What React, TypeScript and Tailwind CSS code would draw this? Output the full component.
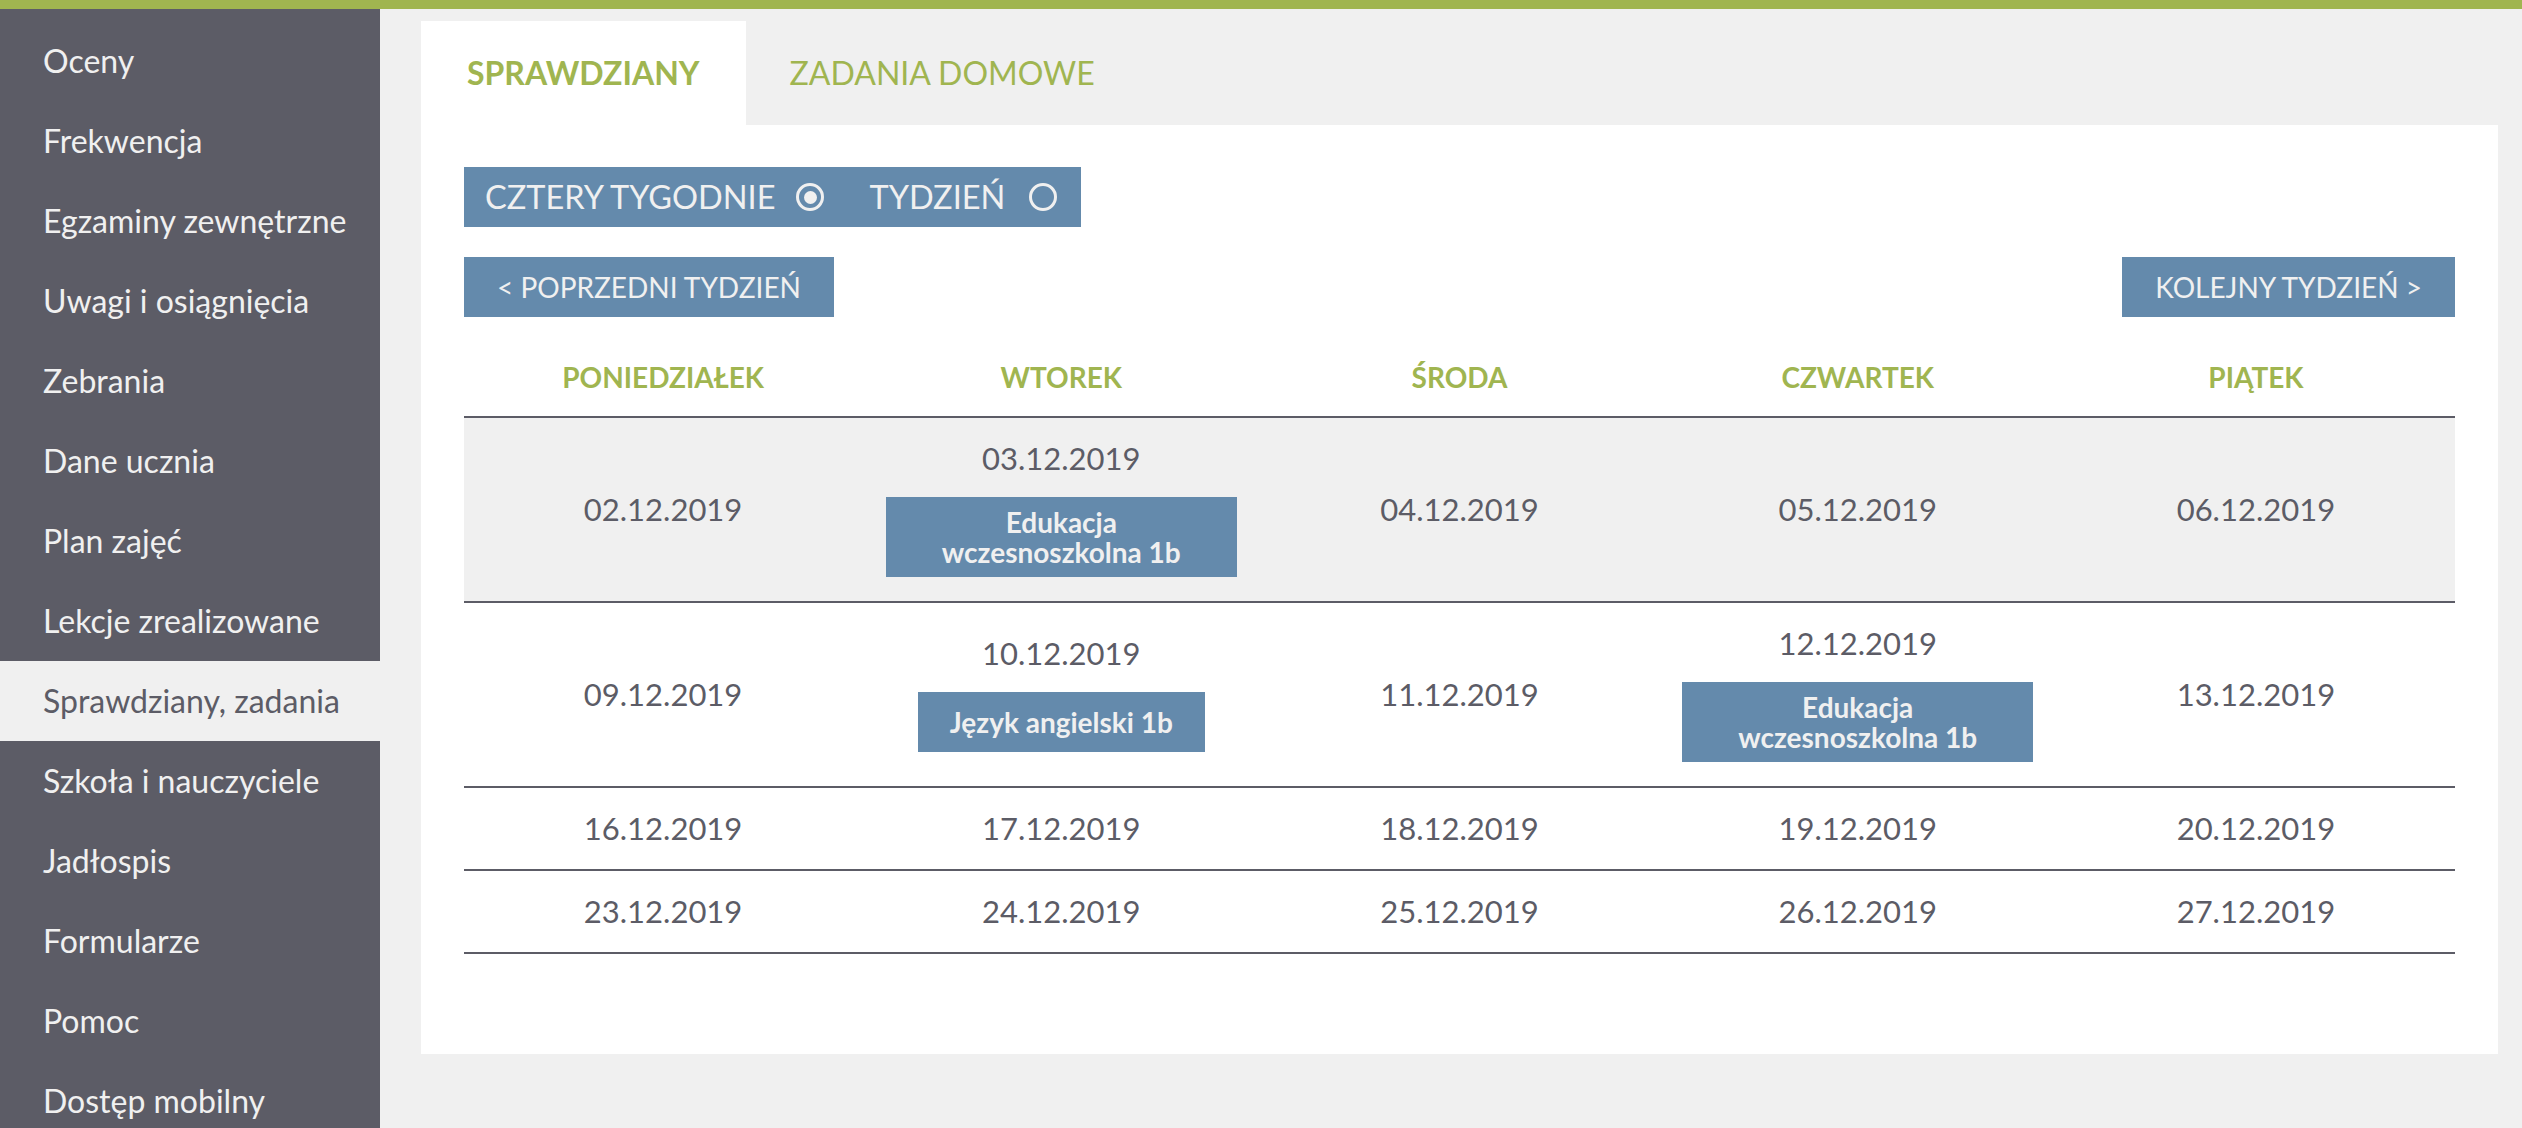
import React from "react";

const menu = [
  "Oceny",
  "Frekwencja",
  "Egzaminy zewnętrzne",
  "Uwagi i osiągnięcia",
  "Zebrania",
  "Dane ucznia",
  "Plan zajęć",
  "Lekcje zrealizowane",
  "Sprawdziany, zadania",
  "Szkoła i nauczyciele",
  "Jadłospis",
  "Formularze",
  "Pomoc",
  "Dostęp mobilny",
];

const days = ["PONIEDZIAŁEK", "WTOREK", "ŚRODA", "CZWARTEK", "PIĄTEK"];

type Cell = { date: string; test?: string };

const weeks: { current?: boolean; cells: Cell[] }[] = [
  {
    current: true,
    cells: [
      { date: "02.12.2019" },
      { date: "03.12.2019", test: "Edukacja wczesnoszkolna 1b" },
      { date: "04.12.2019" },
      { date: "05.12.2019" },
      { date: "06.12.2019" },
    ],
  },
  {
    cells: [
      { date: "09.12.2019" },
      { date: "10.12.2019", test: "Język angielski 1b" },
      { date: "11.12.2019" },
      { date: "12.12.2019", test: "Edukacja wczesnoszkolna 1b" },
      { date: "13.12.2019" },
    ],
  },
  {
    cells: [
      { date: "16.12.2019" },
      { date: "17.12.2019" },
      { date: "18.12.2019" },
      { date: "19.12.2019" },
      { date: "20.12.2019" },
    ],
  },
  {
    cells: [
      { date: "23.12.2019" },
      { date: "24.12.2019" },
      { date: "25.12.2019" },
      { date: "26.12.2019" },
      { date: "27.12.2019" },
    ],
  },
];

function Radio({ checked }: { checked?: boolean }) {
  return (
    <span className="flex h-[28px] w-[28px] items-center justify-center rounded-full border-[3px] border-[#f0f0f0]">
      {checked && <span className="h-[13px] w-[13px] rounded-full bg-[#f0f0f0]" />}
    </span>
  );
}

export default function App() {
  return (
    <div className="h-screen overflow-hidden bg-[#f0f0f0] font-['Lato',sans-serif]">
      <div className="h-[9px] bg-[#a0b550]" />
      <div className="flex min-h-[1119px]">
        <nav className="w-[380px] shrink-0 bg-[#5c5c66] pt-[12px]">
          {menu.map((item) => {
            const active = item === "Sprawdziany, zadania";
            return (
              <div
                key={item}
                className={
                  active
                    ? "flex h-[80px] items-center bg-[#f0f0f0] pl-[43px] text-[32px] text-[#5c5c66]"
                    : "flex h-[80px] items-center pl-[43px] text-[32px] text-[#f0f0f0]"
                }
              >
                {item}
              </div>
            );
          })}
        </nav>

        <main className="flex-1 pl-[41px] pr-[24px] pt-[12px]">
          <div className="flex h-[104px]">
            <div className="flex items-center bg-white px-[46px] text-[32px] font-bold text-[#a0b550]">
              SPRAWDZIANY
            </div>
            <div className="flex items-center pl-[44px] text-[32px] text-[#a0b550]">
              ZADANIA DOMOWE
            </div>
          </div>

          <section className="bg-white px-[43px] pb-[100px] pt-[42px]">
            <div className="inline-flex h-[60px] items-center bg-[#648aac] pl-[21px] pr-[24px] text-[32.5px] text-[#f0f0f0]">
              <span>CZTERY TYGODNIE</span>
              <span className="ml-[21px]">
                <Radio checked />
              </span>
              <span className="ml-[45px]">TYDZIEŃ</span>
              <span className="ml-[24px]">
                <Radio />
              </span>
            </div>

            <div className="mt-[30px] flex justify-between">
              <button className="flex h-[60px] items-center bg-[#648aac] px-[33px] text-[28px] text-[#f0f0f0]">
                &lt; POPRZEDNI TYDZIEŃ
              </button>
              <button className="flex h-[60px] items-center bg-[#648aac] px-[33px] text-[28px] text-[#f0f0f0]">
                KOLEJNY TYDZIEŃ &gt;
              </button>
            </div>

            <div className="mt-[44px] grid grid-cols-5 border-b-2 border-[#5c5c66] pb-[22px]">
              {days.map((d) => (
                <div key={d} className="text-center text-[28px] font-bold leading-[33px] text-[#a0b550]">
                  {d}
                </div>
              ))}
            </div>

            {weeks.map((w, i) => (
              <div
                key={i}
                className={
                  w.current
                    ? "grid grid-cols-5 border-b-2 border-[#5c5c66] bg-[#f0f0f0]"
                    : "grid grid-cols-5 border-b-2 border-[#5c5c66]"
                }
              >
                {w.cells.map((c) => (
                  <div key={c.date} className="flex flex-col items-center justify-center gap-[22px] py-[24px]">
                    <span className="text-[31px] leading-[33px] text-[#5c5c66]">{c.date}</span>
                    {c.test && (
                      <span className="flex min-h-[60px] max-w-[351px] items-center justify-center bg-[#648aac] px-[32px] py-[10px] text-center text-[28px] font-bold leading-[30px] text-[#f0f0f0]">
                        {c.test}
                      </span>
                    )}
                  </div>
                ))}
              </div>
            ))}
          </section>
        </main>
      </div>
    </div>
  );
}
